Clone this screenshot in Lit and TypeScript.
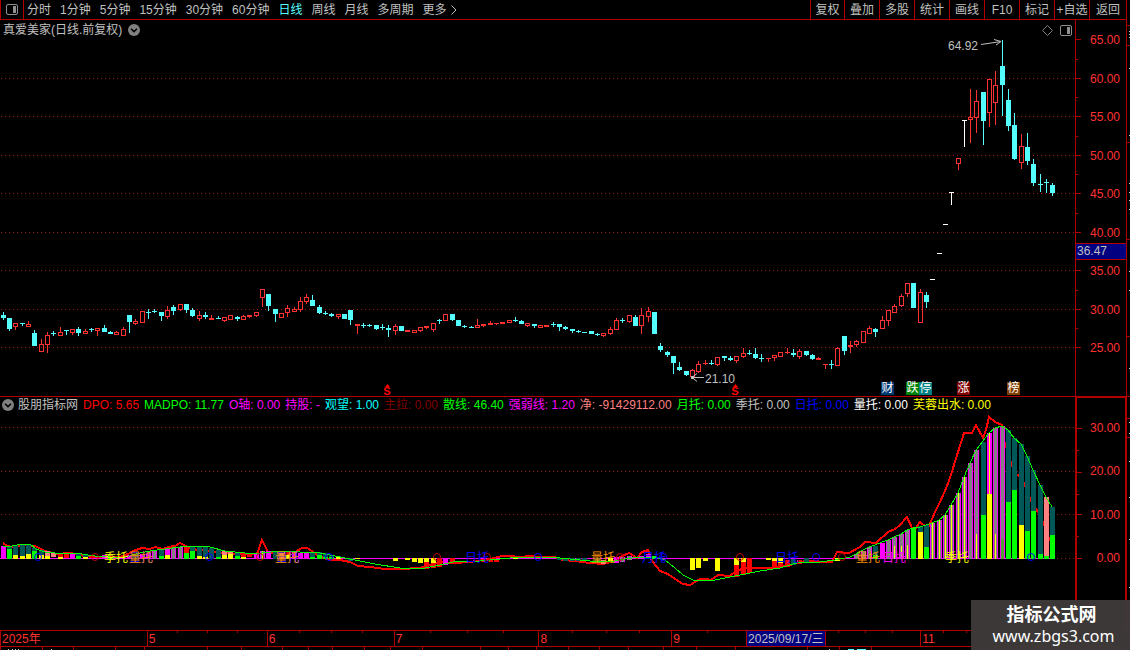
import { LitElement, html, svg, css } from "lit";
import { customElement, state } from "lit/decorators.js";

/* ---------- geometry shared by both panes ---------- */
const PLOT_W = 1075;
const MAIN_TOP = 20;
const MAIN_H = 376;
const SUB_TOP = 397;
const SUB_H = 233;
const ZERO = 558;
const columnX = (i: number) => Math.floor(3.1 + i * 6.324);

/* ---------- candles: kind high low top bottom ---------- */
const CANDLES = `c312 320 315 318,c318 331 318 329,r323 330 323 327,c323 326 323 324,r321 327 324 327,c330 346 333 346,
r339 352 344 352,r332 353 335 345,c331 336 333 334,r327 336 332 336,c330 335 330 331,r329 335 329 333,c327 336 329 333,
r329 334 331 334,c328 332 329 330,r328 336 328 331,c325 332 328 332,c331 334 332 334,r331 335 332 335,r327 336 329 336,
c315 333 315 322,r319 325 321 324,r311 323 311 323,c309 319 312 313,c309 313 311 312,c312 321 312 316,r306 319 310 317,
c305 315 307 311,r304 311 304 310,c304 313 304 310,c308 317 310 316,r311 321 315 319,c312 319 315 317,r315 320 318 320,
c316 319 318 319,r317 322 317 321,r315 320 315 320,c316 321 317 319,r315 320 316 320,r315 318 315 317,r312 317 312 316,
r289 307 289 298,c294 311 294 306,c309 322 309 314,r313 318 313 318,r305 317 308 313,r307 312 309 312,r297 312 301 310,
r294 304 297 302,c295 306 300 306,c305 314 307 313,c311 315 313 314,c313 317 314 316,r314 319 314 317,c314 319 314 319,
c310 325 310 320,r324 334 324 326,c323 328 325 326,c324 327 325 326,c325 330 325 329,c324 330 327 328,c325 337 328 330,
r324 335 326 331,c326 331 326 331,r330 332 330 332,r330 333 330 333,r327 332 327 331,r326 329 326 328,r323 332 323 330,
c319 324 320 321,r314 321 314 321,c314 321 314 320,c320 326 320 326,c325 328 326 327,c326 328 327 328,r319 328 325 328,
r324 327 324 326,r321 325 323 325,r323 325 323 324,r322 324 322 324,r320 323 320 323,c317 322 320 321,c320 324 321 324,
r323 327 323 326,c324 328 324 326,r325 328 325 328,r325 327 325 327,c322 327 324 325,c324 331 324 327,c326 330 327 329,
c329 333 329 331,c330 333 331 332,c332 333 332 333,c331 334 331 334,c333 336 334 335,r333 337 333 336,r327 335 329 334,
r318 330 320 330,c318 323 320 321,r315 323 315 322,c315 326 317 326,r308 334 315 326,r307 322 311 317,c312 334 312 334,
c343 352 346 350,c351 357 352 355,c356 374 356 363,c362 371 367 370,c371 376 371 375,r369 378 370 377,r361 373 364 372,
r360 365 363 364,c360 365 363 364,r357 366 357 365,c356 361 356 358,c356 361 358 360,r356 363 356 361,r348 358 353 357,
c350 355 353 354,c348 359 354 358,c354 362 358 359,r358 362 358 359,r355 361 355 358,r352 357 352 357,r348 354 352 353,
c349 357 353 355,r349 359 351 357,c351 356 351 355,c354 360 355 359,r357 360 358 360,r364 369 364 365,c360 369 364 365,
r347 366 348 366,c336 355 336 351,r341 353 345 347,r340 347 341 345,r331 343 331 343,r326 334 328 334,c328 337 329 332,
r316 329 320 329,r310 326 310 321,r304 313 306 313,r294 307 296 306,r283 297 283 294,c283 308 283 308,r289 323 292 323,
c292 308 295 302,w279 280 279 280,w253 254 253 254,w224 225 224 225,w192 205 192 193,r158 170 158 164,w120 147 120 121,
r89 143 117 120,r90 133 101 118,c92 145 92 121,r79 127 79 113,r71 125 85 103,c40 116 66 85,c89 131 100 126,
c113 160 125 159,r134 169 146 163,c133 165 147 161,c159 186 164 183,c174 192 184 185,c179 193 182 183,c183 196 185 193`
  .split(",")
  .map((s) => s.trim())
  .map((s) => ({ kind: s[0], v: s.slice(1).split(" ").map(Number) }));

const CANDLE_COLOR: Record<string, string> = { c: "#54ffff", r: "#ff3232", w: "#ffffff" };

/* ---------- histogram: column, kind, top, bottom ---------- */
type Bar = [number, string, number, number];
const BARS: Bar[] = [
  [0, "m", 546, 559], [1, "t", 546, 559], [1, "g", 549, 559], [2, "t", 545, 559], [2, "y", 555, 559],
  [3, "t", 544, 559], [3, "y", 556, 559], [4, "t", 544, 559], [4, "y", 554, 559], [5, "t", 548, 559],
  [5, "g", 551, 559], [6, "t", 550, 559], [6, "y", 555, 559], [7, "s", 551, 559], [7, "y", 556, 559],
  [8, "s", 553, 557], [9, "r", 553, 557], [9, "y", 557, 559], [10, "r", 553, 558], [11, "m", 554, 559],
  [12, "t", 554, 559], [12, "g", 556, 559], [13, "t", 555, 559], [13, "y", 557, 559], [14, "r", 556, 558],
  [15, "r", 556, 558], [16, "m", 555, 559], [17, "g", 557, 559], [20, "m", 555, 559], [21, "t", 554, 559],
  [22, "m", 554, 559], [23, "m", 553, 559], [24, "x", 551, 559], [25, "t", 550, 559], [25, "g", 556, 559],
  [26, "m", 549, 559], [26, "y", 555, 559], [27, "x", 548, 559], [28, "x", 547, 559], [29, "r", 547, 553],
  [29, "g", 553, 559], [30, "t", 547, 559], [30, "g", 551, 559], [31, "t", 547, 559], [31, "y", 556, 559],
  [32, "t", 547, 559], [32, "y", 557, 559], [33, "t", 548, 559], [34, "t", 550, 559], [34, "g", 557, 559],
  [35, "s", 551, 559], [35, "y", 555, 559], [36, "s", 551, 559], [36, "y", 554, 559], [37, "t", 552, 559],
  [37, "g", 556, 559], [38, "r", 554, 559], [38, "y", 557, 559], [39, "r", 553, 557], [40, "m", 553, 559],
  [41, "z", 551, 559], [42, "m", 551, 559], [43, "t", 551, 559], [44, "s", 552, 559], [45, "r", 552, 557],
  [45, "y", 555, 559], [46, "m", 552, 559], [47, "m", 553, 559], [48, "m", 552, 559], [49, "t", 552, 559],
  [49, "g", 557, 559], [50, "t", 552, 559], [50, "g", 555, 559], [51, "t", 553, 559], [51, "g", 557, 559],
  [52, "t", 555, 559], [52, "g", 557, 559], [53, "t", 556, 559], [53, "y", 557, 559], [55, "t", 558, 561],
  [56, "y", 558, 559], [62, "y", 558, 561], [64, "y", 558, 560], [65, "y", 558, 562], [66, "y", 558, 563],
  [67, "y", 558, 562], [67, "r", 562, 569], [68, "y", 558, 563], [68, "r", 563, 568], [69, "r", 558, 567],
  [70, "m", 558, 565], [71, "r", 558, 564], [76, "r", 559, 562], [77, "r", 559, 562], [78, "r", 559, 562],
  [79, "y", 558, 559], [81, "y", 558, 559], [88, "t", 558, 560], [89, "t", 558, 561], [90, "t", 558, 561],
  [91, "t", 558, 561], [92, "t", 558, 561], [94, "t", 558, 563], [95, "s", 560, 564], [96, "y", 558, 562],
  [97, "m", 557, 563], [98, "x", 557, 562], [99, "x", 556, 560], [101, "m", 556, 558], [102, "m", 554, 558],
  [103, "g", 556, 559], [109, "y", 558, 570], [110, "y", 558, 568], [111, "y", 558, 561], [113, "y", 558, 571],
  [116, "y", 558, 565], [116, "r", 565, 577], [117, "y", 558, 562], [117, "r", 562, 575], [118, "r", 558, 573],
  [121, "y", 558, 560], [122, "y", 558, 561], [122, "r", 561, 569], [123, "y", 558, 563], [123, "r", 563, 567],
  [124, "r", 560, 567], [125, "t", 559, 565], [126, "r", 560, 564], [127, "t", 558, 563], [132, "y", 558, 561],
  [135, "x", 554, 559], [136, "x", 551, 559], [137, "x", 547, 559], [138, "t", 546, 559], [138, "g", 555, 559],
  [139, "m", 543, 559], [140, "x", 540, 559], [141, "x", 537, 559], [141, "b", 546, 559], [142, "x", 534, 559],
  [142, "b", 546, 559], [143, "x", 530, 559], [143, "b", 545, 559], [144, "g", 528, 559], [145, "t", 526, 559],
  [145, "y", 532, 559], [146, "t", 525, 559], [146, "g", 547, 559], [147, "z", 523, 559], [148, "z", 520, 559],
  [149, "z", 515, 559], [150, "z", 505, 559], [151, "z", 493, 559], [151, "b", 538, 559], [152, "z", 477, 559],
  [153, "x", 463, 559], [154, "x", 450, 559], [154, "b", 534, 559], [155, "t", 442, 559], [155, "g", 515, 559],
  [156, "n", 433, 559], [156, "y", 494, 559], [157, "x", 428, 559], [157, "b", 534, 559], [158, "x", 426, 559],
  [158, "h", 539, 559], [159, "t", 430, 559], [159, "g", 502, 559], [160, "t", 438, 559], [160, "g", 490, 559],
  [161, "t", 444, 559], [161, "y", 525, 559], [162, "t", 456, 559], [162, "g", 531, 559], [163, "t", 470, 559],
  [163, "g", 511, 559], [164, "t", 485, 559], [164, "g", 554, 559], [165, "s", 497, 559], [165, "g", 556, 559],
  [166, "t", 507, 559], [166, "g", 535, 559],
];

/* each kind is a stack of centred stripes: [width, colour] */
const STRIPES: Record<string, [number, string][]> = {
  m: [[5, "#ff00ff"]],
  t: [[5, "#005858"]],
  g: [[5, "#00ff00"]],
  y: [[5, "#ffff00"]],
  s: [[5, "#ff8080"]],
  r: [[5, "#ff0000"]],
  x: [[5, "#ff00ff"], [3, "#808080"]],
  z: [[5, "#ff00ff"], [3, "#808080"], [1, "#ffff00"]],
  n: [[5, "#ff00ff"], [1, "#ffff00"]],
  b: [[3, "#808080"], [1, "#ffff00"]],
  h: [[3, "#50a030"]],
};

const RED_LINE =
  "3,543 7,546 12,547 22,545 35,546 45,551 57,554 70,553 85,556 100,557 120,557 128,554 133,551 142,548 150,549 155,547 163,549 168,547 175,546 180,543 188,547 197,550 210,551 222,553 235,554 257,554 262,540 268,552 280,554 295,552 302,548 307,548 312,551 318,556 330,560 340,560 350,562 358,566 370,567 385,569 400,569 420,568 430,565 440,562 455,563 470,562 490,559 502,556 510,556 520,557 530,556 540,557 555,557 562,560 575,561 590,563 603,564 614,561 620,557 629,553 637,558 642,552 648,550 651,559 653,562 660,571 668,574 675,579 683,584 690,585 700,579 706,579 711,580 718,575 730,576 736,571 742,569 750,568 770,568 787,566 800,562 806,561 832,562 837,552 849,553 860,547 865,542 876,543 888,532 895,529 900,525 907,517 913,530 915,529 920,522 926,527 929,526 935,512 940,502 945,491 950,478 958,452 964,433 972,433 976,425 983,438 986,430 989,417 995,422 1002,425 1004,440 1011,463 1016,474 1021,477 1024,483 1032,503 1040,515 1046,530 1050,541";
const GREEN_LINE =
  "3,546 12,546 22,544 30,544 36,549 45,552 55,553 75,553 95,556 110,557 125,557 140,553 150,551 165,549 180,547 200,546 210,547 225,551 245,553 262,553 280,551 300,552 315,552 330,555 345,558 360,561 375,564 400,568 425,568 440,565 453,562 480,561 500,559 520,557 550,557 560,558 590,561 610,562 625,559 640,557 655,557 665,560 675,568 683,575 693,580 710,581 725,578 740,575 760,571 780,568 800,562 820,562 835,560 850,557 869,547 875,545 882,542 888,540 894,537 901,534 907,530 913,528 920,527 926,525 932,523 939,520 945,515 951,505 958,493 964,477 970,463 976,450 983,441 989,433 995,428 1002,426 1008,430 1014,438 1021,444 1027,456 1033,470 1040,485 1046,497 1052,507";

const PERIODS = ["分时", "1分钟", "5分钟", "15分钟", "30分钟", "60分钟", "日线", "周线", "月线", "多周期", "更多"];
const TOOLS = ["复权", "叠加", "多股", "统计", "画线", "F10", "标记", "+自选", "返回"];

const READOUT: [string, string, string][] = [
  ["DPO:", "5.65", "#ff0000"],
  ["MADPO:", "11.77", "#00ff00"],
  ["O轴:", "0.00", "#ff00ff"],
  ["持股:", "-", "#ff00ff"],
  ["观望:", "1.00", "#00ffff"],
  ["主拉:", "0.00", "#800000"],
  ["散线:", "46.40", "#00ff00"],
  ["强弱线:", "1.20", "#ff00ff"],
  ["净:", "-91429112.00", "#ff8080"],
  ["月托:", "0.00", "#00ff00"],
  ["季托:", "0.00", "#c0c0c0"],
  ["日托:", "0.00", "#0000ff"],
  ["量托:", "0.00", "#ffffff"],
  ["芙蓉出水:", "0.00", "#ffff00"],
];

/* event tags under the candles: text, x, background */
const TAGS: [string, number, string][] = [
  ["财", 881, "#003a74"],
  ["跌", 906, "#008000"],
  ["停", 919, "#008080"],
  ["涨", 957, "#800000"],
  ["榜", 1007, "#804000"],
];

/* signals along the zero line: text, x, colour */
const SIGNALS: [string, number, string][] = [
  ["日托", 129, "#0000ff"],
  ["季托", 104, "#ffff00"],
  ["量托", 129, "#ff9000"],
  ["日托", 276, "#0000ff"],
  ["量托", 275, "#ff9000"],
  ["日托", 465, "#0000ff"],
  ["量托", 591, "#ff9000"],
  ["月托", 642, "#0000ff"],
  ["日托", 775, "#0000ff"],
  ["量托", 856, "#ff9000"],
  ["日托", 882, "#ff00ff"],
  ["季托", 945, "#ffff00"],
];

/* ring markers on the zero line: x, colour */
const RINGS: [number, string][] = [
  [38, "#0000ff"], [95, "#c00000"], [209, "#0000ff"], [260, "#c00000"], [329, "#0000ff"],
  [437, "#c00000"], [487, "#c00000"], [538, "#0000ff"], [620, "#c00000"], [663, "#0000ff"],
  [740, "#c00000"], [816, "#0000ff"], [842, "#c00000"], [1031, "#0000ff"],
];

/* date axis cells: label, width share, highlighted */
const DATES: [string, number, boolean][] = [
  ["2025年", 147, false],
  ["5", 120, false],
  ["6", 127, false],
  ["7", 145, false],
  ["8", 133, false],
  ["9", 74, false],
  ["2025/09/17/三", 78, true],
  ["", 95, false],
  ["11", 208, false],
];
const WEEK_TICKS = [177, 207, 237, 299, 331, 362, 430, 467, 503, 572, 606, 639, 707, 838, 865, 892, 943, 966];
const STRIP_TICKS = [
  0, 42, 73, 115, 144, 207, 241, 282, 308, 332, 364, 390, 422, 480, 508, 536, 568, 599, 628, 663, 696, 735, 807, 839, 871,
];

const PRICE_ROWS = [78, 116, 155, 193, 232, 270, 309, 347];
const PRICES = ["65.00", "60.00", "55.00", "50.00", "45.00", "40.00", "35.00", "30.00", "25.00"];
const LEVEL_ROWS = [427, 471, 514, 558];
const LEVELS = ["30.00", "20.00", "10.00", "0.00"];

const rect = (x: number, y: number, w: number, h: number, fill: string) =>
  svg`<rect x=${x} y=${y} width=${w} height=${h} fill=${fill}></rect>`;

@customElement("round-toggle")
class RoundToggle extends LitElement {
  static styles = css`
    :host { display: flex; }
    button { display: flex; padding: 0; border: 0; background: none; }
  `;
  render() {
    return html`<button aria-label="展开">
      <svg width="12" height="12" viewBox="0 0 12 12">
        <circle cx="6" cy="6" r="6" fill="#808080"></circle>
        <path d="M3 4.8 L6 7.6 L9 4.8" fill="none" stroke="#000" stroke-width="1.5"></path>
      </svg>
    </button>`;
  }
}

@customElement("app-root")
class AppRoot extends LitElement {
  @state() private period = "日线";

  static styles = css`
    :host {
      display: flex;
      flex-direction: column;
      position: relative;
      height: 100vh;
      overflow: hidden;
      background: #000;
      color: #c0c0c0;
      font: 12px/14px "Liberation Sans", "Noto Sans CJK SC", sans-serif;
    }
    * { box-sizing: border-box; }
    button { font: inherit; color: inherit; background: none; border: 0; padding: 0; white-space: nowrap; }
    svg { display: block; }

    .toolbar { display: flex; flex: none; height: 20px; border-bottom: 1px solid #b00000; margin-right: 3px; }
    .side { display: flex; align-items: center; justify-content: center; width: 24px; border: solid #b00000; border-width: 0 1px; }
    .periods { display: flex; align-items: center; gap: 9px; padding-left: 3px; flex: 1; }
    .periods .on { color: #54ffff; }
    .more { display: flex; align-items: center; gap: 4px; }
    .tools { display: flex; border-right: 1px solid #b00000; }
    .tools button { width: 35px; border-left: 1px solid #b00000; display: flex; align-items: center; justify-content: center; }
    .tools button:first-child { width: 34px; }
    .tools button:last-child { width: 37px; }

    .body { flex: 1; min-height: 0; display: grid; grid-template-columns: 1fr 52px 3px; grid-template-rows: 376fr 234fr; }
    .pane { position: relative; min-width: 0; min-height: 0; }
    .graph { position: absolute; inset: 0; width: 100%; height: 100%; }
    .lower { border-top: 1px solid #b00000; }

    .title { position: relative; display: flex; align-items: center; gap: 6px; padding: 2px 3px 0; height: 18px; }
    .title .grow { flex: 1; }
    .title .icons { display: flex; align-items: center; gap: 7px; }
    .readout { position: relative; display: flex; align-items: center; gap: 5px; height: 16px; padding-left: 2px; white-space: nowrap; }
    .readout .name { display: flex; align-items: center; gap: 4px; }
    .readout span { white-space: pre; }

    .mark { position: absolute; white-space: nowrap; }
    .tag { width: 13px; height: 13px; line-height: 13px; color: #fff; text-align: center; }
    .dollar { display: flex; flex-direction: column; align-items: center; color: #f00; font-weight: bold; font-size: 11px; line-height: 9px; width: 8px; }

    .axis { position: relative; display: flex; flex-direction: column; color: #ff3232; text-align: right; border: solid #b00000; border-width: 0 1px; padding-right: 6px; min-height: 0; }
    .axis.low { border-width: 2px 2px 0; padding-right: 5px; }
    .axis .label { height: 0; min-height: 0; }
    .axis .label span { display: block; margin-top: -7px; }
    .cursor { position: absolute; left: 0; right: 0; height: 17px; border: solid #b00000; border-width: 1px 0; background: #000080; color: #c0c0c0; text-align: left; padding-left: 1px; line-height: 15px; }

    .dates { flex: none; position: relative; display: flex; height: 17px; margin-right: 3px; border: solid #b00000; border-width: 1px 0; color: #ff3232; line-height: 16px; }
    .dates .cell { min-width: 0; padding-left: 1px; border-left: 1px solid #b00000; white-space: nowrap; overflow: hidden; }
    .dates .cell:first-child { border-left: 0; padding-left: 3px; }
    .dates .now { background: #000080; color: #c0c0c0; }
    .strip { flex: none; height: 3px; width: 100%; }

    .brand { position: absolute; right: 0; bottom: 0; width: 159px; height: 50px; padding: 4px 0 0 2px; background: rgba(62, 58, 58, 0.97); color: #fff; text-align: center; text-decoration: none; }
    .brand b { display: block; font-size: 18px; line-height: 23px; }
    .brand span { display: block; padding-left: 4px; font: 16px/18px "Noto Sans", sans-serif; }
  `;

  private grid(rows: number[]) {
    return rows.map(
      (y) => svg`<line x1="1" x2=${PLOT_W} y1=${y + 0.5} y2=${y + 0.5} stroke="#a01414" stroke-dasharray="1 3"></line>`
    );
  }

  private candle(kind: string, v: number[], i: number) {
    const [high, low, top, bottom] = v;
    const x = columnX(i);
    const color = CANDLE_COLOR[kind];
    const hollow = kind === "r" && bottom - top > 2;
    return svg`
      ${high < top ? rect(x, high, 1, top - high, color) : ""}
      ${low > bottom ? rect(x, bottom, 1, low - bottom, color) : ""}
      ${hollow
        ? svg`<rect x=${x - 1.5} y=${top + 0.5} width="4" height=${bottom - top - 1} fill="none" stroke=${color}></rect>`
        : rect(x - 2, top, 5, bottom - top, color)}`;
  }

  private place(x: number, y: number, top: number, height: number) {
    return `left:${(x / PLOT_W) * 100}%;top:${((y - top) / height) * 100}%`;
  }

  private panelIcon() {
    return html`<svg width="12" height="11" viewBox="0 0 12 11">
      <rect x="0.5" y="0.5" width="11" height="10" rx="1.5" fill="none" stroke="#909090"></rect>
      <rect x="7" y="2" width="3" height="7" fill="#909090"></rect>
    </svg>`;
  }

  private toolbar() {
    return html`<nav class="toolbar">
      <button class="side" aria-label="侧栏">${this.panelIcon()}</button>
      <div class="periods">
        ${PERIODS.map(
          (p) => html`<button class=${p === this.period ? "on" : p === "更多" ? "more" : ""} @click=${() => (this.period = p)}>${p}${
            p === "更多"
              ? html`<svg width="6" height="10" viewBox="0 0 6 10"><path d="M0.5 0.5 L5 5 L0.5 9.5" fill="none" stroke="#c0c0c0"></path></svg>`
              : ""
          }</button>`
        )}
      </div>
      <div class="tools">${TOOLS.map((t) => html`<button>${t}</button>`)}</div>
    </nav>`;
  }

  private mainPane() {
    return html`<section class="pane">
      <svg class="graph" viewBox="0 ${MAIN_TOP} ${PLOT_W} ${MAIN_H}" preserveAspectRatio="none">
        <g shape-rendering="crispEdges">
          ${this.grid(PRICE_ROWS)}
          ${CANDLES.map((c, i) => this.candle(c.kind, c.v, i))}
        </g>
        <path d="M981 44.5 L1001 41.5 M994 39.5 L1001 41.5 L996 45" fill="none" stroke="#c0c0c0"></path>
        <path d="M704 377.5 H692 M697 373.5 L692 377.5 L697 381.5" fill="none" stroke="#c0c0c0"></path>
        <rect x="691" y="376" width="3" height="3" fill="#c0c0c0"></rect>
      </svg>
      <div class="title">
        <span>真爱美家(日线.前复权)</span>
        <round-toggle></round-toggle>
        <span class="grow"></span>
        <div class="icons">
          <svg width="11" height="11" viewBox="0 0 11 11"><path d="M5.5 0.5 L10.5 5.5 L5.5 10.5 L0.5 5.5 Z" fill="none" stroke="#808080"></path></svg>
          ${this.panelIcon()}
        </div>
      </div>
      <span class="mark" style=${this.place(948, 39, MAIN_TOP, MAIN_H)}>64.92</span>
      <span class="mark" style=${this.place(705, 372, MAIN_TOP, MAIN_H)}>21.10</span>
      ${[383, 731].map(
        (x) => html`<span class="mark dollar" style=${this.place(x, 384, MAIN_TOP, MAIN_H)}>
          <svg width="5" height="3" viewBox="0 0 5 3"><path d="M2.5 0 L5 3 H0 Z" fill="#f00"></path></svg>S
        </span>`
      )}
      ${TAGS.map(
        ([t, x, bg]) => html`<span class="mark tag" style="${this.place(x, 382, MAIN_TOP, MAIN_H)};background:${bg}">${t}</span>`
      )}
    </section>`;
  }

  private subPane() {
    return html`<section class="pane lower">
      <svg class="graph" viewBox="0 ${SUB_TOP} ${PLOT_W} ${SUB_H}" preserveAspectRatio="none">
        <g shape-rendering="crispEdges">
          ${this.grid(LEVEL_ROWS)}
          ${rect(0, ZERO, 1054, 1, "#ff00ff")}
          <polyline points=${RED_LINE} fill="none" stroke="#ff0000" stroke-width="2"></polyline>
          ${BARS.map(([i, kind, top, bottom]) =>
            STRIPES[kind].map(([w, color]) => rect(columnX(i) - (w - 1) / 2, top, w, bottom - top, color))
          )}
          <polyline points=${GREEN_LINE} fill="none" stroke="#00ff00"></polyline>
        </g>
        ${RINGS.map(([x, color]) => svg`<circle cx=${x} cy="557" r="3.5" fill="none" stroke=${color}></circle>`)}
      </svg>
      <div class="readout">
        <span class="name"><round-toggle></round-toggle>股朋指标网</span>
        ${READOUT.map(([name, value, color]) => html`<span style="color:${color}">${name} ${value}</span>`)}
      </div>
      ${SIGNALS.map(
        ([t, x, color]) => html`<span class="mark" style="${this.place(x, 551, SUB_TOP, SUB_H)};color:${color}">${t}</span>`
      )}
    </section>`;
  }

  private axis(cls: string, labels: string[], top: number, height: number, first: number, step: number, ticks: number[], minor: number[]) {
    const last = top + height - first - step * (labels.length - 1);
    return html`<div class="axis ${cls}">
      <svg class="graph" viewBox="0 ${top} 50 ${height}" preserveAspectRatio="none" shape-rendering="crispEdges">
        ${ticks.map((y) => rect(0, y, 5, 1, "#b00000"))} ${minor.map((y) => rect(0, y, 2, 1, "#b00000"))}
      </svg>
      <div style="flex:${first - top}"></div>
      ${labels.map(
        (l, i) => html`<div class="label" style="flex:${i === labels.length - 1 ? last : step}"><span>${l}</span></div>`
      )}
      ${cls === "" ? html`<div class="cursor" style="top:${((243 - top) / height) * 100}%">36.47</div>` : ""}
    </div>`;
  }

  render() {
    return html`
      ${this.toolbar()}
      <main class="body">
        ${this.mainPane()}
        ${this.axis("", PRICES, MAIN_TOP, MAIN_H, 40, 38.5, [39, ...PRICE_ROWS], [59, 97, 136, 174, 213, 290, 328])}
        <svg width="3" height="100%" viewBox="0 20 3 376" preserveAspectRatio="none" shape-rendering="crispEdges">
          ${[25, 45, 142, 239, 336].map((y) => rect(0, y, 3, 1, "#b00000"))}
          ${[31, 34, 37, 68, 135, 183, 192, 200, 209, 271, 290, 368].map((y) => rect(2, y, 1, 1, "#c0c0c0"))}
        </svg>
        ${this.subPane()}
        ${this.axis("low", LEVELS, SUB_TOP, SUB_H, 427, 43.7, LEVEL_ROWS, [449, 493, 536])}
        <svg width="3" height="100%" viewBox="0 396 3 234" preserveAspectRatio="none" shape-rendering="crispEdges">
          ${[396, 418, 437].map((y) => rect(0, y, 3, 1, "#b00000"))}
          ${[422, 433, 461, 497, 539, 587].map((y) => rect(2, y, 1, 1, "#c0c0c0"))}
        </svg>
      </main>
      <div class="dates">
        <svg class="graph" viewBox="0 0 1127 15" preserveAspectRatio="none" shape-rendering="crispEdges">
          ${WEEK_TICKS.map((x) => rect(x, 0, 1, 2, "#b00000"))}
        </svg>
        ${DATES.map(
          ([label, share, now]) => html`<div class="cell ${now ? "now" : ""}" style="flex:${share} 1 0">${label}</div>`
        )}
      </div>
      <svg class="strip" viewBox="0 0 1130 3" preserveAspectRatio="none" shape-rendering="crispEdges">
        ${STRIP_TICKS.map((x) => rect(x, 0, 1, 3, "#b00000"))}
        ${[8, 12, 15, 18, 51, 829].map((x) => rect(x, 2, 1, 1, "#c0c0c0"))}
        ${rect(848, 2, 6, 1, "#54ffff")} ${rect(857, 2, 9, 1, "#54ffff")}
      </svg>
      <a class="brand" href="#"><b>指标公式网</b><span>www.zbgs3.com</span></a>
    `;
  }
}
